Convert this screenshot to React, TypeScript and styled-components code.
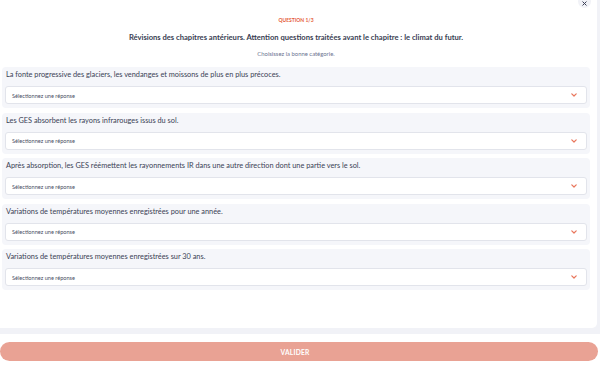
import styled, { createGlobalStyle } from 'styled-components'

const GlobalStyle = createGlobalStyle`
  html, body {
    margin: 0;
    padding: 0;
    background: #ffffff;
    font-family: Lato, "Noto Sans", sans-serif;
    overflow: hidden;
  }
  * {
    box-sizing: border-box;
  }
`

const Page = styled.div`
  width: 600px;
  height: 366px;
  display: flex;
  flex-direction: column;
  position: relative;
`

const Backdrop = styled.div`
  background: #f1f2f7;
  padding: 0 3px 6px 0;
  height: 334px;
`

const Panel = styled.div`
  background: #ffffff;
  height: 100%;
  border-radius: 0 0 5px 0;
  padding: 16px 7px 0 2px;
  display: flex;
  flex-direction: column;
`

const CloseButton = styled.div`
  position: absolute;
  top: -5px;
  left: 578px;
  width: 13px;
  height: 13px;
  border-radius: 50%;
  background: #f1f2f7;
  display: flex;
  align-items: flex-end;
  justify-content: center;
  padding-bottom: 2px;
`

const Step = styled.div`
  text-align: center;
  font-size: 5px;
  font-weight: 700;
  color: #e55a36;
  text-transform: uppercase;
  line-height: 8px;
`

const Title = styled.div`
  text-align: center;
  font-size: 7.6px;
  font-weight: 700;
  color: #383d52;
  margin-top: 8px;
  line-height: 10px;
`

const Subtitle = styled.div`
  text-align: center;
  font-size: 5.9px;
  color: #6b7390;
  margin-top: 8px;
  line-height: 8px;
`

const Questions = styled.div`
  display: flex;
  flex-direction: column;
  gap: 4.5px;
  margin-top: 9px;
`

const Card = styled.div`
  background: #f5f6fa;
  border-radius: 4px;
  padding: 3px 3px 4px 3px;
`

const Statement = styled.div`
  font-size: 7.35px;
  color: #3a3f55;
  line-height: 10px;
  padding: 0 1px 6px 1px;
`

const Select = styled.div`
  height: 18px;
  background: #ffffff;
  border: 1px solid #e2e4eb;
  border-radius: 3px;
  display: flex;
  align-items: center;
  justify-content: space-between;
  padding: 0 9px 0 6px;
`

const Placeholder = styled.span`
  font-size: 5.6px;
  color: #4a4f63;
`

const Footer = styled.div`
  padding: 8px 2px 0 0;
`

const SubmitButton = styled.div`
  height: 19px;
  border-radius: 10px;
  background: #e9a294;
  color: #ffffff;
  font-size: 6.7px;
  font-weight: 700;
  letter-spacing: 0.2px;
  display: flex;
  align-items: center;
  justify-content: center;
  padding-right: 8px;
`

const Chevron = () => (
  <svg width="6" height="4" viewBox="0 0 6 4">
    <path d="M0.8 0.8 L3 3 L5.2 0.8" fill="none" stroke="#e9765c" strokeWidth="1.2" strokeLinecap="round" strokeLinejoin="round" />
  </svg>
)

const statements = [
  'La fonte progressive des glaciers, les vendanges et moissons de plus en plus précoces.',
  'Les GES absorbent les rayons infrarouges issus du sol.',
  'Après absorption, les GES réémettent les rayonnements IR dans une autre direction dont une partie vers le sol.',
  'Variations de températures moyennes enregistrées pour une année.',
  'Variations de températures moyennes enregistrées sur 30 ans.',
]

export default function App() {
  return (
    <>
      <GlobalStyle />
      <Page>
        <Backdrop>
          <Panel>
            <Step>Question 1/3</Step>
            <Title>
              Révisions des chapitres antérieurs. Attention questions traitées avant le chapitre : le climat du futur.
            </Title>
            <Subtitle>Choisissez la bonne catégorie.</Subtitle>
            <Questions>
              {statements.map((s) => (
                <Card key={s}>
                  <Statement>{s}</Statement>
                  <Select>
                    <Placeholder>Sélectionnez une réponse</Placeholder>
                    <Chevron />
                  </Select>
                </Card>
              ))}
            </Questions>
          </Panel>
        </Backdrop>
        <Footer>
          <SubmitButton>VALIDER</SubmitButton>
        </Footer>
        <CloseButton>
          <svg width="5" height="5" viewBox="0 0 5 5">
            <path d="M0.8 0.8 L4.2 4.2 M4.2 0.8 L0.8 4.2" stroke="#3a3f55" strokeWidth="1" strokeLinecap="round" />
          </svg>
        </CloseButton>
      </Page>
    </>
  )
}
